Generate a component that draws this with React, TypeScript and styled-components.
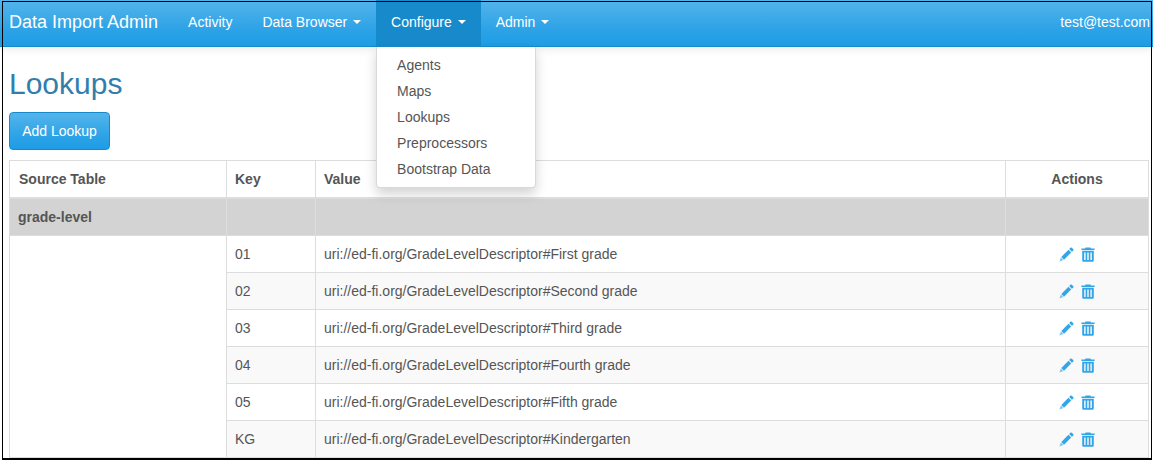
import React from "react";
import styled, { createGlobalStyle } from "styled-components";

const rows = [
  { key: "01", value: "uri://ed-fi.org/GradeLevelDescriptor#First grade" },
  { key: "02", value: "uri://ed-fi.org/GradeLevelDescriptor#Second grade" },
  { key: "03", value: "uri://ed-fi.org/GradeLevelDescriptor#Third grade" },
  { key: "04", value: "uri://ed-fi.org/GradeLevelDescriptor#Fourth grade" },
  { key: "05", value: "uri://ed-fi.org/GradeLevelDescriptor#Fifth grade" },
  { key: "KG", value: "uri://ed-fi.org/GradeLevelDescriptor#Kindergarten" },
];

const menuItems = ["Agents", "Maps", "Lookups", "Preprocessors", "Bootstrap Data"];

const PencilIcon = () => (
  <svg width="15" height="15" viewBox="0 0 15 15" fill="#34a6e8">
    <path d="M11.6 0.6 Q12.2 0.2 12.8 0.7 L14.3 2.2 Q14.8 2.8 14.3 3.4 L12.9 4.8 L10.2 2 Z" />
    <path d="M9.5 2.7 L12.2 5.5 L5 12.7 L2.3 9.9 Z" />
    <path d="M1.9 10.6 L4.4 13.1 L0.4 14.6 Z" fill="#7cc4ef" />
  </svg>
);

const TrashIcon = () => (
  <svg width="14" height="15" viewBox="0 0 14 15" fill="#34a6e8">
    <path d="M4.6 0.4 H9.4 L10 1.6 H13.6 V3 H0.4 V1.6 H4 Z" />
    <path
      fillRule="evenodd"
      d="M1.2 3.8 H12.8 V13.6 Q12.8 14.8 11.6 14.8 H2.4 Q1.2 14.8 1.2 13.6 Z M3.2 5.4 V13 H4.6 V5.4 Z M6.3 5.4 V13 H7.7 V5.4 Z M9.4 5.4 V13 H10.8 V5.4 Z"
    />
  </svg>
);

const App = () => (
  <Page>
    <GlobalStyle />
    <Navbar>
      <Brand>Data Import Admin</Brand>
      <NavItem>Activity</NavItem>
      <NavItem>
        Data Browser <Caret />
      </NavItem>
      <NavDropdown>
        <NavItem $open>
          Configure <Caret />
        </NavItem>
        <Menu>
          {menuItems.map(item => (
            <MenuItem key={item}>{item}</MenuItem>
          ))}
        </Menu>
      </NavDropdown>
      <NavItem>
        Admin <Caret />
      </NavItem>
      <UserName>test@test.com</UserName>
    </Navbar>
    <Content>
      <Title>Lookups</Title>
      <AddButton>Add Lookup</AddButton>
      <Table>
        <colgroup>
          <col style={{ width: 217 }} />
          <col style={{ width: 89 }} />
          <col style={{ width: 690 }} />
          <col />
        </colgroup>
        <thead>
          <tr>
            <HeadCell>Source Table</HeadCell>
            <HeadCell>Key</HeadCell>
            <HeadCell>Value</HeadCell>
            <HeadCell $center>Actions</HeadCell>
          </tr>
        </thead>
        <tbody>
          <tr>
            <GroupCell>grade-level</GroupCell>
            <GroupCell />
            <GroupCell />
            <GroupCell />
          </tr>
          {rows.map((row, index) => (
            <Row key={row.key} $striped={index % 2 === 1}>
              {index === 0 && <BlankCell rowSpan={rows.length} />}
              <Cell>{row.key}</Cell>
              <Cell>{row.value}</Cell>
              <Cell $center>
                <Actions>
                  <PencilIcon />
                  <TrashIcon />
                </Actions>
              </Cell>
            </Row>
          ))}
        </tbody>
      </Table>
    </Content>
    <FrameLine />
  </Page>
);

const GlobalStyle = createGlobalStyle`
  html, body {
    margin: 0;
    padding: 0;
    background: #ffffff;
  }

  body {
    font-family: "Liberation Sans", Arial, sans-serif;
    font-size: 14px;
    line-height: 20px;
    color: #555555;
  }
`;

const Page = styled.div`
  position: relative;
  width: 1153px;
  height: 462px;
  overflow: hidden;
`;

// the black line round the screenshot lies over everything else
const FrameLine = styled.div`
  position: absolute;
  z-index: 3;
  top: 1px;
  left: 2px;
  right: 1px;
  bottom: 2px;
  border: 1px solid #000000;
  border-bottom-width: 2px;
  pointer-events: none;
`;

const Navbar = styled.nav`
  display: flex;
  align-items: stretch;
  box-sizing: border-box;
  height: 47px;
  padding-left: 9px;
  background: linear-gradient(#54b4eb, #2fa4e7 60%, #1d9ce5);
  border-bottom: 1px solid #178acc;
  box-shadow: 0 1px 10px rgba(0, 0, 0, 0.1);
  color: #ffffff;
`;

const Brand = styled.div`
  display: flex;
  align-items: center;
  margin-right: 15px;
  padding-bottom: 3px;
  font-size: 18px;
`;

const NavItem = styled.div<{ $open?: boolean }>`
  display: flex;
  align-items: center;
  box-sizing: border-box;
  height: 100%;
  padding: 0 15px 3px;
  white-space: pre;
  background: ${({ $open }) => ($open ? "#178acc" : "transparent")};
`;

const Caret = styled.span`
  display: inline-block;
  margin-left: 2px;
  border-top: 4px solid #ffffff;
  border-left: 4px solid transparent;
  border-right: 4px solid transparent;
`;

const NavDropdown = styled.div`
  position: relative;
`;

const Menu = styled.div`
  position: absolute;
  z-index: 2;
  top: 47px;
  left: 0;
  box-sizing: border-box;
  width: 160px;
  padding: 5px 0;
  background: #ffffff;
  border: 1px solid rgba(0, 0, 0, 0.15);
  border-top: none;
  border-radius: 0 0 4px 4px;
  box-shadow: 0 6px 12px rgba(0, 0, 0, 0.175);
`;

const MenuItem = styled.div`
  height: 26px;
  padding-left: 20px;
  line-height: 26px;
  color: #555555;
`;

const UserName = styled.div`
  display: flex;
  align-items: center;
  margin-left: auto;
  margin-right: 3px;
  padding-bottom: 3px;
`;

const Content = styled.main`
  padding-left: 9px;
`;

const Title = styled.h1`
  margin: 20px 0 12px;
  font-size: 30px;
  line-height: 33px;
  font-weight: 400;
  color: #317eac;
`;

const AddButton = styled.button`
  display: block;
  width: 101px;
  height: 38px;
  margin-bottom: 10px;
  padding: 0;
  font: inherit;
  color: #ffffff;
  background: linear-gradient(#54b4eb, #2fa4e7 60%, #1d9ce5);
  border: 1px solid #178acc;
  border-radius: 4px;
`;

const Table = styled.table`
  width: 1140px;
  table-layout: fixed;
  border-collapse: collapse;
  border: 1px solid #dddddd;
`;

const HeadCell = styled.th<{ $center?: boolean }>`
  box-sizing: border-box;
  height: 37px;
  padding: 0 8px;
  text-align: ${({ $center }) => ($center ? "center" : "left")};
  font-weight: 700;
  border: 1px solid #dddddd;
  border-bottom: 2px solid #dddddd;

  &:first-child {
    padding-left: 9px;
  }
`;

const GroupCell = styled.td`
  box-sizing: border-box;
  height: 38px;
  padding: 0 8px;
  font-weight: 700;
  background: #d3d3d3;
  border: 1px solid #dddddd;
`;

const Row = styled.tr<{ $striped: boolean }>`
  background: ${({ $striped }) => ($striped ? "#f9f9f9" : "#ffffff")};
`;

const BlankCell = styled.td`
  background: #ffffff;
  border: 1px solid #dddddd;
`;

const Cell = styled.td<{ $center?: boolean }>`
  box-sizing: border-box;
  height: 37px;
  padding: 0 8px;
  text-align: ${({ $center }) => ($center ? "center" : "left")};
  border: 1px solid #dddddd;
`;

const Actions = styled.span`
  display: inline-flex;
  align-items: center;
  gap: 7px;
  padding-bottom: 2px;
  vertical-align: middle;
`;

export default App;
